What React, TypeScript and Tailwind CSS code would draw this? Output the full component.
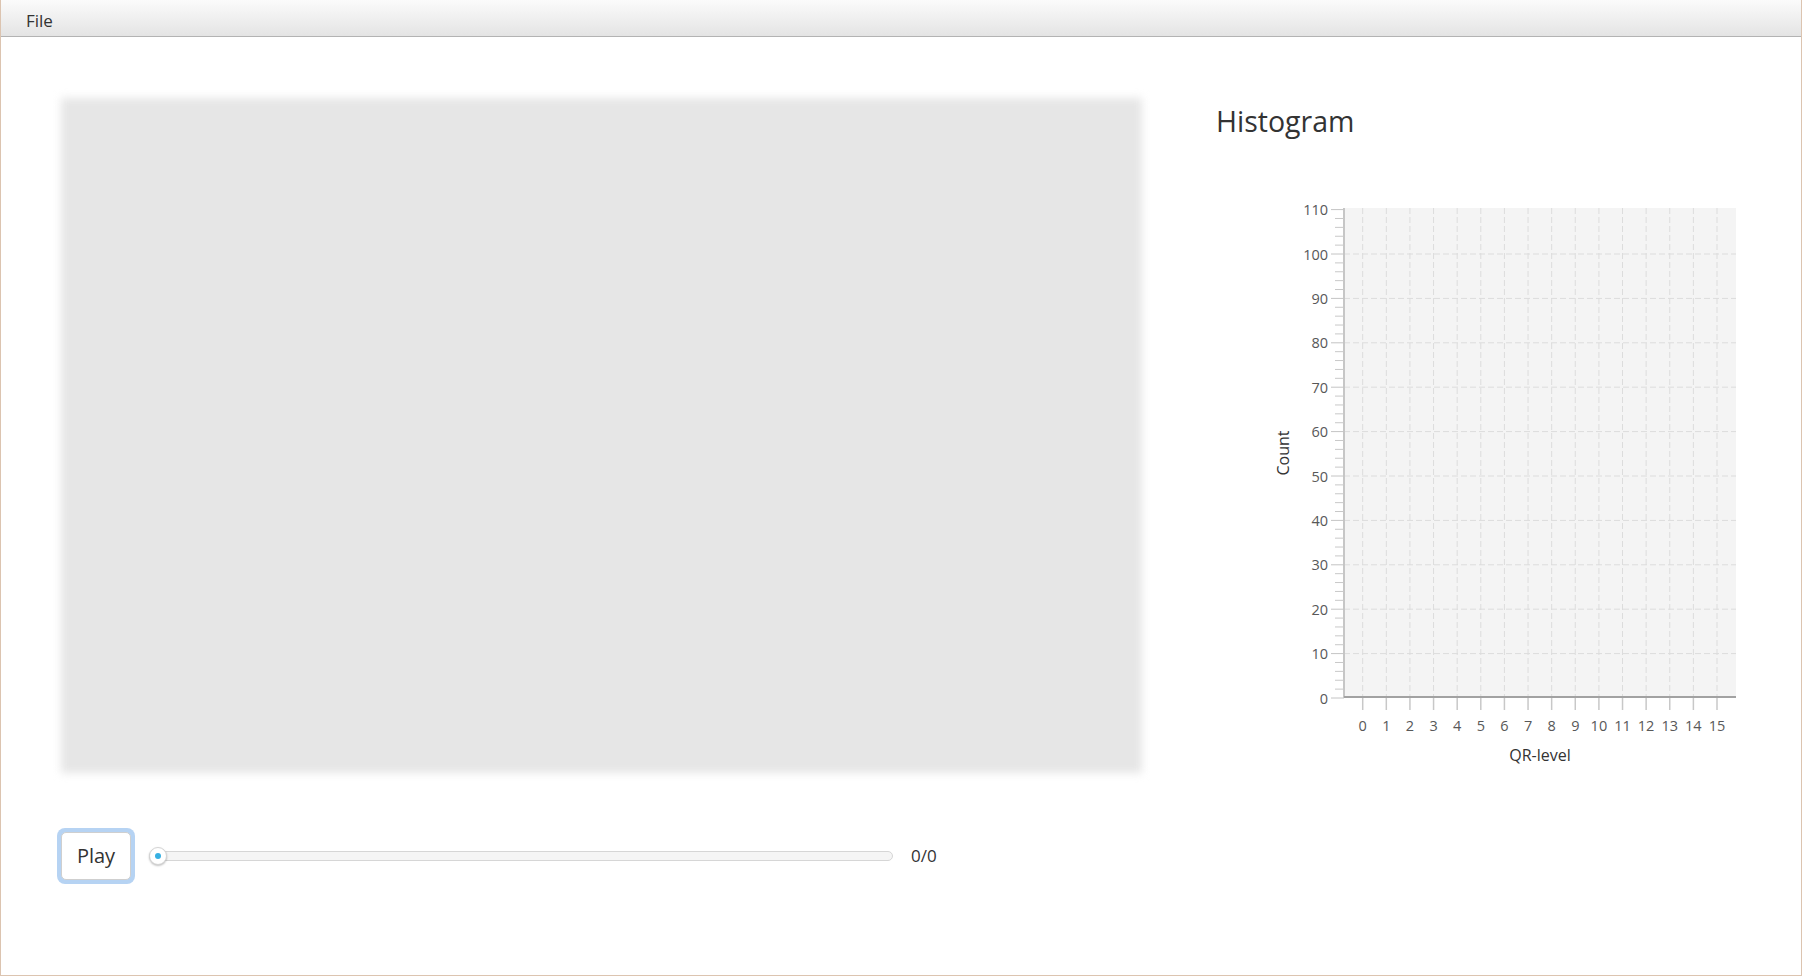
import React from "react";

const yTicks = Array.from({ length: 12 }, (_, i) => i * 10);
const minor = Array.from({ length: 56 }, (_, i) => i).filter((k) => k % 5 !== 0);
const cats = Array.from({ length: 16 }, (_, i) => i);

// plot box inside the svg
const L = 93;
const R = 485;
const T = 20;
const B = 510;
const yOf = (v: number) => B - v * 4.44;
const xOf = (i: number) => 111.7 + 23.62 * i;

function Histogram() {
  return (
    <svg width={510} height={590} className="ml-[109px] mt-[47px] block font-['Open_Sans',sans-serif]">
      <rect x={L} y={T} width={R - L} height={B - T} fill="#f4f4f4" />
      {yTicks.slice(1, 11).map((v) => (
        <line key={v} x1={L} x2={R} y1={yOf(v)} y2={yOf(v)} stroke="#dcdcdc" strokeWidth={1} strokeDasharray="6 3" />
      ))}
      {cats.map((i) => (
        <line key={i} x1={xOf(i)} x2={xOf(i)} y1={T} y2={B} stroke="#dcdcdc" strokeWidth={1} strokeDasharray="6 3" />
      ))}
      {/* y axis */}
      <line x1={L} x2={L} y1={T} y2={B} stroke="#c6c6c6" strokeWidth={2} />
      {minor.map((k) => (
        <line key={k} x1={L - 9} x2={L} y1={B - k * 8.88} y2={B - k * 8.88} stroke="#c8c8c8" strokeWidth={1} />
      ))}
      {yTicks.map((v) => (
        <g key={v}>
          <line x1={L - 13} x2={L} y1={yOf(v)} y2={yOf(v)} stroke="#c4c4c4" strokeWidth={1} />
          <text x={77} y={yOf(v)} textAnchor="end" dominantBaseline="central" fontSize={14.5} fill="#585858">
            {v}
          </text>
        </g>
      ))}
      {/* x axis */}
      <line x1={L} x2={R} y1={B - 1} y2={B - 1} stroke="#a2a2a2" strokeWidth={2} />
      {cats.map((i) => (
        <g key={i}>
          <line x1={xOf(i)} x2={xOf(i)} y1={B} y2={B + 12} stroke="#c8c8c8" strokeWidth={1.5} />
          <text x={xOf(i)} y={537} textAnchor="middle" dominantBaseline="central" fontSize={14.5} fill="#585858">
            {i}
          </text>
        </g>
      ))}
      <text x={32} y={265} transform="rotate(-90 32 265)" textAnchor="middle" dominantBaseline="central" fontSize={16} fill="#333">
        Count
      </text>
      <text x={289} y={567} textAnchor="middle" dominantBaseline="central" fontSize={16} fill="#333">
        QR-level
      </text>
    </svg>
  );
}

export default function App() {
  return (
    <div className="flex h-[976px] w-[1802px] flex-col overflow-hidden border-x border-b border-[#dcc4b0] bg-white font-['Open_Sans',sans-serif] text-[#333]">
      <div className="flex h-[37px] shrink-0 items-center border-b border-[#b3b3b3] bg-gradient-to-b from-[#fbfbfb] to-[#e4e4e4] pl-[25px] pt-[4px]">
        <span className="text-[17px] leading-none text-[#333]">File</span>
      </div>

      <div className="flex flex-1">
        <div className="ml-[60px] w-[1081px] shrink-0">
          <div className="mt-[61px] h-[675px] bg-[#e6e6e6] blur-[4px]" />
          <div className="-ml-[4px] mt-[55px] flex items-center">
            <div className="rounded-[8px] bg-[#b6d3f3] p-[4px]">
              <button className="flex h-[48px] w-[70px] items-center justify-center rounded-[5px] border border-[#cfcfcf] bg-white text-[20px] text-[#333]">
                Play
              </button>
            </div>
            <div className="relative ml-[14px] flex h-[20px] w-[744px] items-center">
              <div className="h-[10px] w-full rounded-full border-[1.5px] border-[#d6d6d6] bg-[#f5f5f5]" />
              <div className="absolute left-0 top-[1px] flex h-[18px] w-[18px] items-center justify-center rounded-full border border-[#d4d4d4] bg-white shadow-[0_1px_2px_rgba(0,0,0,0.25)]">
                <div className="h-[6px] w-[6px] rounded-full bg-[#37b0e2]" />
              </div>
            </div>
            <span className="ml-[18px] text-[17px] text-[#333]">0/0</span>
          </div>
        </div>

        <div className="flex-1">
          <div className="ml-[74px] mt-[64px] text-[28.5px] leading-[40px] text-[#333]">Histogram</div>
          <Histogram />
        </div>
      </div>
    </div>
  );
}
